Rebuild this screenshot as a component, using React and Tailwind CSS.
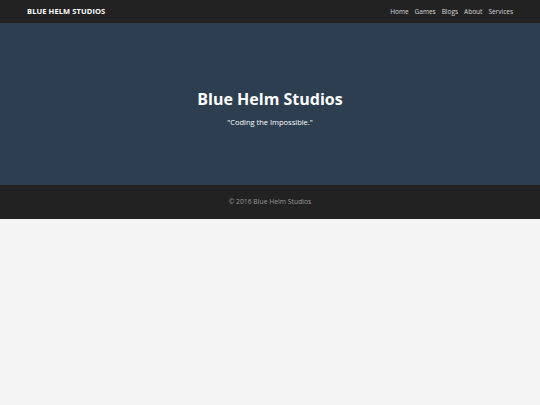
export default function App() {
  return (
    <div className="min-h-[405px] bg-[#f4f4f4]" style={{ fontFamily: '"Open Sans", sans-serif' }}>
      <nav className="h-[23px] bg-[#222222] flex items-center justify-between pl-[27px] pr-[27px]">
        <div className="text-white font-bold text-[7.5px] tracking-[0.1px]">BLUE HELM STUDIOS</div>
        <ul className="flex gap-[6px] text-[6.5px] text-[#d8d8d8]">
          <li>Home</li>
          <li>Games</li>
          <li>Blogs</li>
          <li>About</li>
          <li>Services</li>
        </ul>
      </nav>
      <section className="h-[162px] bg-[#2c3e50] flex flex-col items-center justify-center text-white">
        <h1 className="text-[16px] font-bold leading-none mt-[10px]">Blue Helm Studios</h1>
        <p className="text-[7.5px] leading-[10px] mt-[10px]">"Coding the Impossible."</p>
      </section>
      <footer className="h-[34px] bg-[#222222] flex items-center justify-center text-[6.8px] text-[#999999]">
        © 2016 Blue Helm Studios
      </footer>
    </div>
  );
}
